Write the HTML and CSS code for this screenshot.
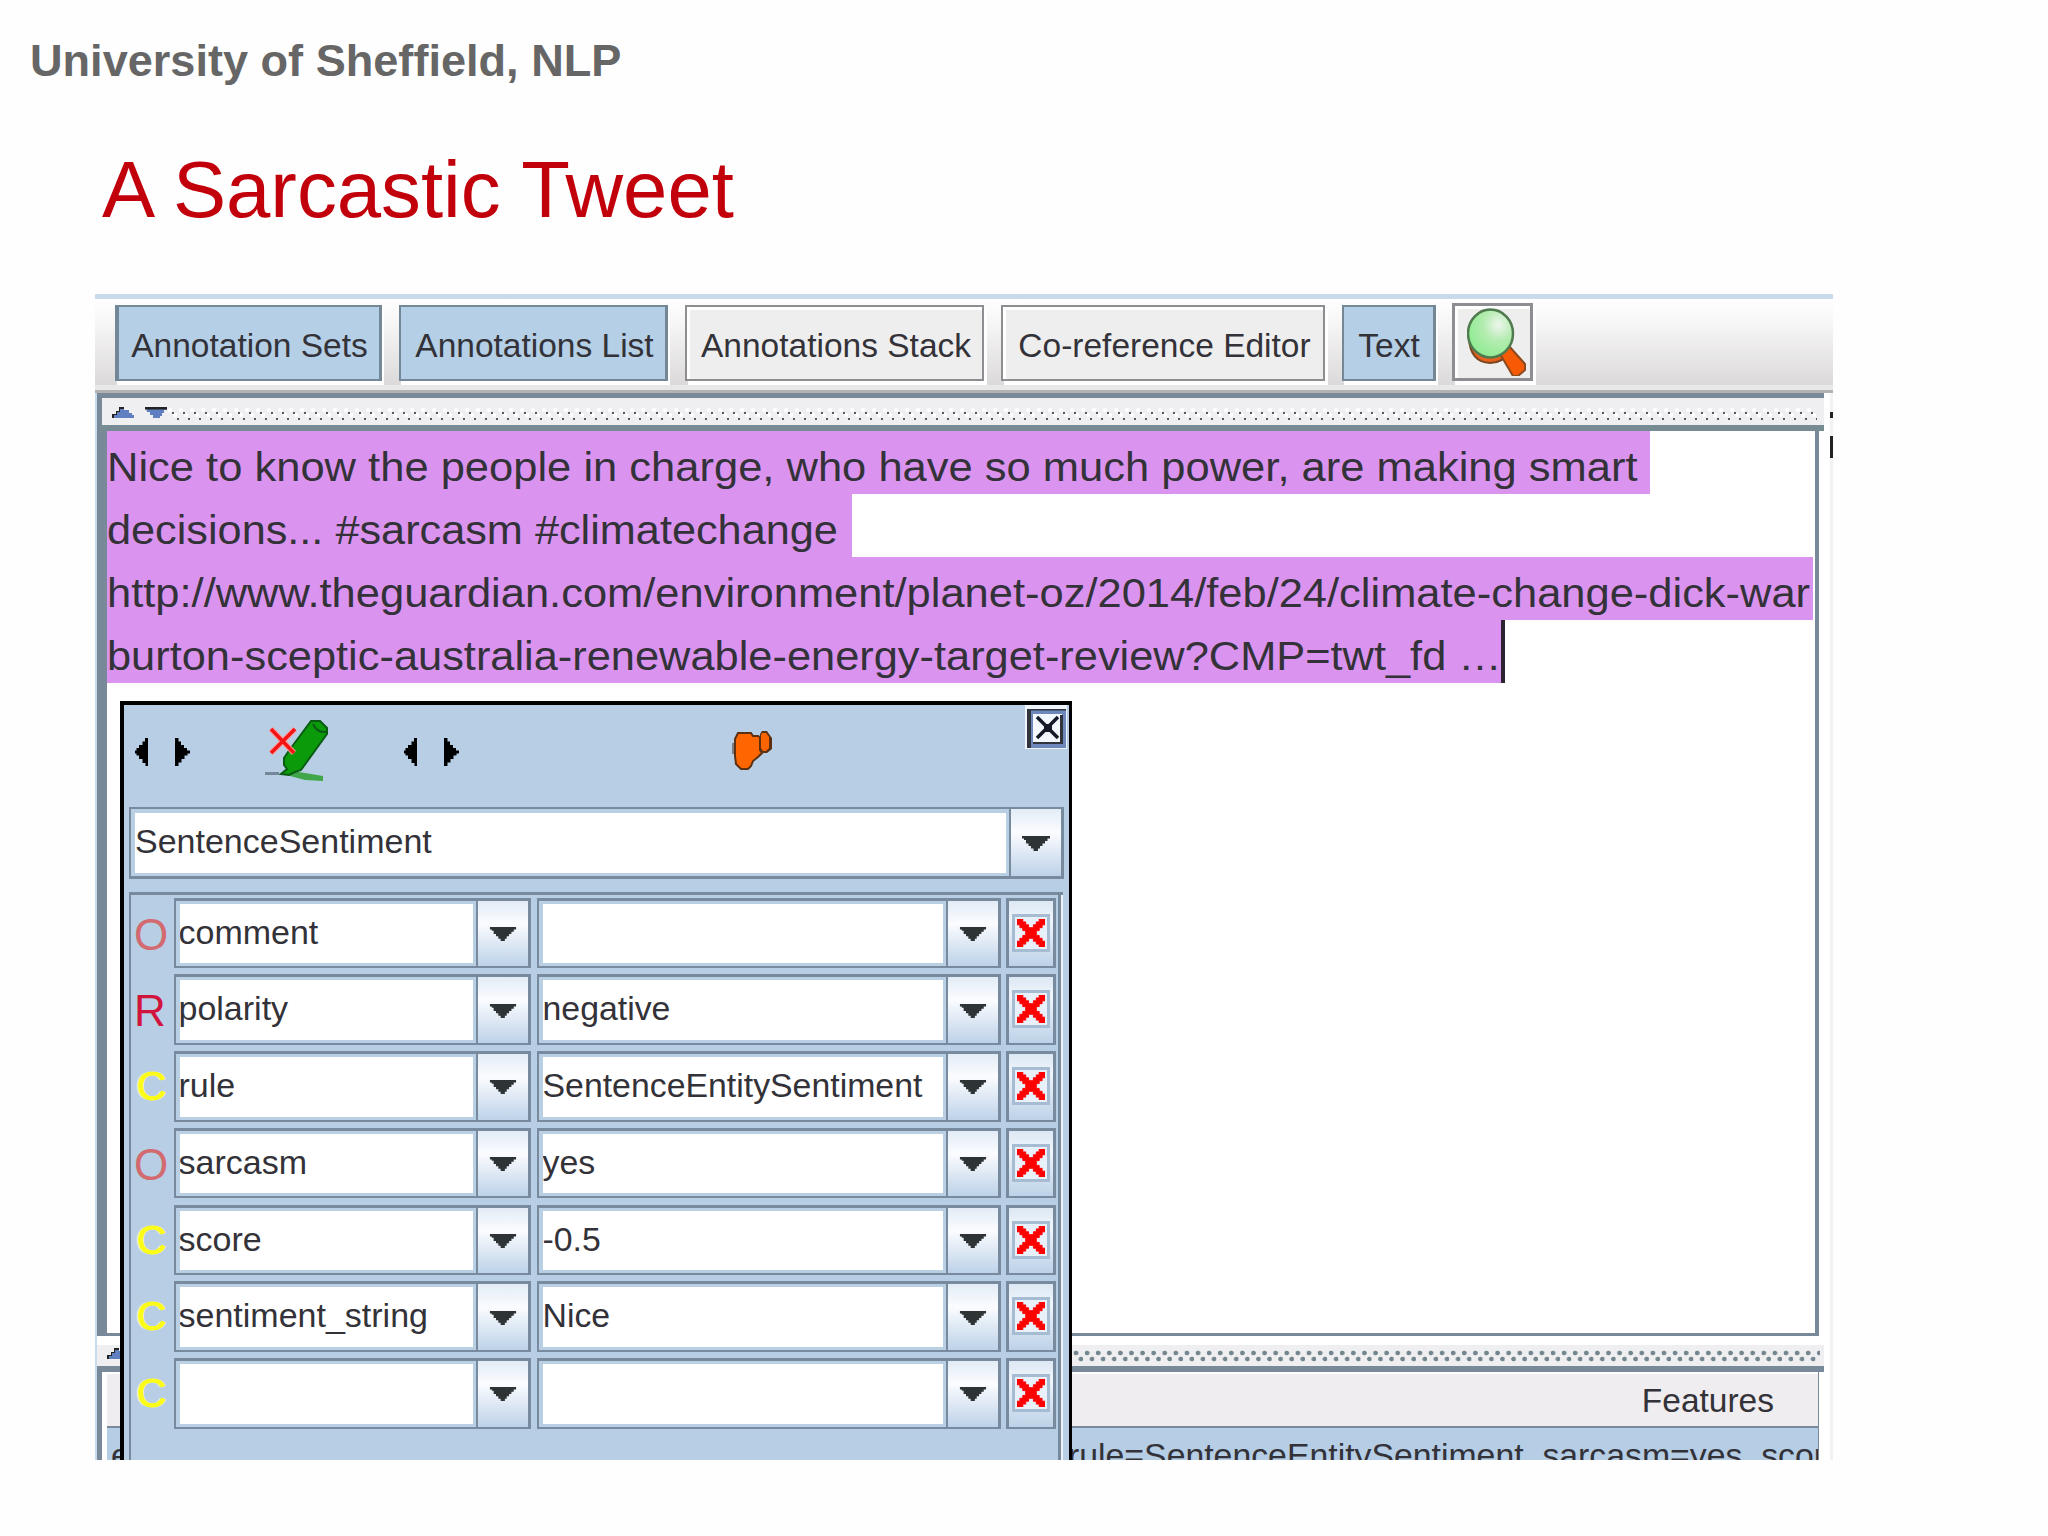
FILE: index.html
```html
<!DOCTYPE html>
<html lang="en">
<head>
<meta charset="utf-8">
<title>A Sarcastic Tweet</title>
<link rel="stylesheet" href="styles.css">
</head>
<body>
<svg class="defs" aria-hidden="true">
  <symbol id="down" viewBox="0 0 28 15"><path d="M0 0H28V2.6H25.5V5H23V7.500H20.500V10H18V12.500H16V15H11.500V12.500H9V10H6.500V7.500H4V4H2V2.600H0Z" fill="#2e3436"/></symbol>
  <symbol id="cross" viewBox="0 0 29 29"><path d="M0 0H6V3H9V6H12V9H17V6H20V3H23V0H29V6H26V9H23V12H20V17H23V20H26V23H29V29H23V26H20V23H17V20H12V23H9V26H6V29H0V23H3V20H6V17H9V12H6V9H3V6H0Z" fill="#f00" stroke="#f00"/></symbol>
  <symbol id="prev" viewBox="0 0 13 28"><path d="M13 0V28H10.500V25H7.500V21H4V17.500H1.500V15.500H0V12.500H1.500V10H4V7H7.500V3.500H10V0Z"/></symbol>
  <symbol id="next" viewBox="0 0 15 28"><path d="M0 0H3.500V3.500H6V7H9V10H12V12.500H15V15.500H12.500V17.500H9.500V21H6.500V24.500H3.500V28H0Z"/></symbol>
</svg>
<p class="org">University of Sheffield, NLP</p>
<h1 class="title">A Sarcastic Tweet</h1>

<main class="app">
  <div class="toolbar">
    <div class="tool on w1">Annotation Sets</div>
    <div class="tool on w2">Annotations List</div>
    <div class="tool w3">Annotations Stack</div>
    <div class="tool w4">Co-reference Editor</div>
    <div class="tool on w5">Text</div>
    <div class="tool find">
      <svg width="62" height="68" viewBox="0 0 62 68">
        <defs><radialGradient id="lens" cx=".68" cy=".32" r=".75"><stop offset="0" stop-color="#eef6ee"/><stop offset=".45" stop-color="#b4ecb0"/><stop offset="1" stop-color="#8cec90"/></radialGradient></defs>
        <path d="M2 30Q3 54 23 55Q36 55 42 44L40 34 4 28Z" fill="#e8601c" stroke="#7a4420" stroke-width="2"/>
        <path d="M33 46 42 38 58 56 58 62 51 68 46 68Z" fill="#f75a05" stroke="#8c4a20" stroke-width="2"/>
        <ellipse cx="23.500" cy="25.500" rx="22.500" ry="24" fill="url(#lens)" stroke="#4e7a4e" stroke-width="2.500"/>
      </svg>
    </div>
  </div>

  <div class="body">
    <div class="main">
      <div class="split top">
        <svg class="tri" width="56" height="14" viewBox="0 0 56 14"><path d="M0 11V7H4V4H7V0H12V3H17V6H20V8H22V11Z" fill="#5f7fc0"/><path d="M0 11V7H4V4H7V0H12V2H8V5H5V8H2V11Z" fill="#222"/><path d="M34 1H55V3H52V6H50V9H48V11H41V8H38V5H35Z" fill="#5f7fc0"/><path d="M33 0H55V2.500H33Z" fill="#222"/></svg>
        <div class="dots"></div>
      </div>
      <div class="pane">
        <div class="line l1"><span>Nice to know the people in charge, who have so much power, are making smart</span></div>
        <div class="line l2"><span>decisions... #sarcasm #climatechange</span></div>
        <div class="line l3"><span>http://www.theguardian.com/environment/planet-oz/2014/feb/24/climate-change-dick-war</span></div>
        <div class="line l4"><span>burton-sceptic-australia-renewable-energy-target-review?CMP=twt_fd …</span></div>
      </div>
      <div class="split low">
        <svg class="tri" width="22" height="11" viewBox="0 0 22 11"><path d="M0 11V7H4V4H7V0H12V3H17V6H20V8H22V11Z" fill="#5f7fc0"/><path d="M0 11V7H4V4H7V0H12V2H8V5H5V8H2V11Z" fill="#222"/></svg>
        <div class="dots"></div>
      </div>
      <div class="table">
        <div class="thead">Features</div>
        <div class="trow"><span class="cut">e</span><span class="feat">rule=SentenceEntitySentiment, sarcasm=yes, score</span></div>
      </div>
    </div>
    <div class="edge"></div>
  </div>

  <section class="popup">
    <svg class="close" width="42" height="44" viewBox="0 0 42 44"><path d="M0 0H42V44H0Z" fill="#eef3fb"/><path d="M2 4H41V43H2Z" fill="#6e88bd"/><path d="M2 4H6V43H2ZM2 4H41V5.500H2Z" fill="#30343c"/><path d="M8 9H37V37H8Z" fill="#f4f8ff"/><path d="M35 10H38V39H8V37H35Z" fill="#30343c"/><path d="M12 12 33 33M33 12 12 33" stroke="#141a28" stroke-width="3.500"/><path d="M19 19H27V27H19Z" fill="#141a28"/></svg>
    <div class="nav">
      <svg class="a1" width="13" height="28"><use href="#prev"/></svg>
      <svg class="a2" width="15" height="28"><use href="#next"/></svg>
      <svg class="pen" width="64" height="62" viewBox="0 0 64 62">
        <path d="M0 52H14V55H0Z" fill="#75889a"/><path d="M14 53 34 52 58 56V61L40 60Z" fill="#3fa64a"/>
        <path d="M46 1H55L62 8V14L36 50 30 52 24 55 16 54 22 49 19 45V38L23 32Z" fill="#0a9a0a" stroke="#0a5c14" stroke-width="2"/>
        <path d="M48 4Q52 13 61 12" fill="none" stroke="#0a5c14" stroke-width="2"/>
        <path d="M6 9 29 33M30 9 6 33" stroke="#ff9a9a" stroke-width="5.500"/><path d="M6 9 29 33M30 9 6 33" stroke="#f51414" stroke-width="3.500"/>
      </svg>
      <svg class="a3" width="13" height="28"><use href="#prev"/></svg>
      <svg class="a4" width="15" height="28"><use href="#next"/></svg>
      <svg class="pin" width="44" height="42" viewBox="0 0 44 42"><path d="M1 13H4V24H1Z" fill="#7c7c80"/><path d="M7 3H20L22 6H27L29 7V20L31 23 27 27 22 31 20 36 17 39H10L5 34 4 26V9Z" fill="#ff6600" stroke="#5c3010" stroke-width="2"/><path d="M31 1H36L38 4 41 8V19L36 23H32L29 19V4Z" fill="#5c3010"/><path d="M31 3H35L38 7V18L35 21H32L30 18V5Z" fill="#fa6400"/></svg>
    </div>
    <div class="combo type"><div class="field">SentenceSentiment</div><div class="drop"><svg width="28" height="15"><use href="#down"/></svg></div></div>
    <div class="features">
      <div class="row"><b class="o">O</b><div class="combo key"><div class="field">comment</div><div class="drop"><svg width="28" height="14"><use href="#down"/></svg></div></div><div class="combo val"><div class="field"></div><div class="drop"><svg width="28" height="14"><use href="#down"/></svg></div></div><div class="del"><i><svg width="28" height="28"><use href="#cross"/></svg></i></div></div>
      <div class="row"><b class="r">R</b><div class="combo key"><div class="field">polarity</div><div class="drop"><svg width="28" height="14"><use href="#down"/></svg></div></div><div class="combo val"><div class="field">negative</div><div class="drop"><svg width="28" height="14"><use href="#down"/></svg></div></div><div class="del"><i><svg width="28" height="28"><use href="#cross"/></svg></i></div></div>
      <div class="row"><b class="c">C</b><div class="combo key"><div class="field">rule</div><div class="drop"><svg width="28" height="14"><use href="#down"/></svg></div></div><div class="combo val"><div class="field">SentenceEntitySentiment</div><div class="drop"><svg width="28" height="14"><use href="#down"/></svg></div></div><div class="del"><i><svg width="28" height="28"><use href="#cross"/></svg></i></div></div>
      <div class="row"><b class="o">O</b><div class="combo key"><div class="field">sarcasm</div><div class="drop"><svg width="28" height="14"><use href="#down"/></svg></div></div><div class="combo val"><div class="field">yes</div><div class="drop"><svg width="28" height="14"><use href="#down"/></svg></div></div><div class="del"><i><svg width="28" height="28"><use href="#cross"/></svg></i></div></div>
      <div class="row"><b class="c">C</b><div class="combo key"><div class="field">score</div><div class="drop"><svg width="28" height="14"><use href="#down"/></svg></div></div><div class="combo val"><div class="field">-0.5</div><div class="drop"><svg width="28" height="14"><use href="#down"/></svg></div></div><div class="del"><i><svg width="28" height="28"><use href="#cross"/></svg></i></div></div>
      <div class="row"><b class="c">C</b><div class="combo key"><div class="field">sentiment_string</div><div class="drop"><svg width="28" height="14"><use href="#down"/></svg></div></div><div class="combo val"><div class="field">Nice</div><div class="drop"><svg width="28" height="14"><use href="#down"/></svg></div></div><div class="del"><i><svg width="28" height="28"><use href="#cross"/></svg></i></div></div>
      <div class="row"><b class="c">C</b><div class="combo key"><div class="field"></div><div class="drop"><svg width="28" height="14"><use href="#down"/></svg></div></div><div class="combo val"><div class="field"></div><div class="drop"><svg width="28" height="14"><use href="#down"/></svg></div></div><div class="del"><i><svg width="28" height="28"><use href="#cross"/></svg></i></div></div>
    </div>
  </section>
</main>
</body>
</html>
```
FILE: styles.css
```css
* { box-sizing: border-box; }
body {
  margin: 0;
  padding-top: 30.500px;
  height: 1536px;
  overflow: hidden;
  background: #fefefe;
  font-family: "Liberation Sans", Arial, sans-serif;
  color: #333238;
}
svg { display: block; flex: none; }
.defs { display: none; }
.org { margin: 0 0 0 30px; font-size: 45.100px; line-height: 60px; font-weight: bold; color: #666; }
.title { margin: 49.500px 0 54px 102px; font-size: 79.700px; line-height: 100px; font-weight: normal; color: #c2000b; }

.app {
  position: relative;
  display: flex;
  flex-direction: column;
  width: 1738px;
  height: 1166px;
  margin-left: 95px;
  overflow: hidden;
  background: #fff;
  font-size: 34px;
  white-space: nowrap;
}

/* toolbar */
.toolbar {
  display: flex;
  flex: none;
  gap: 17px;
  align-items: flex-start;
  height: 99px;
  padding: 6px 0 0 20px;
  border-top: 5px solid #c8daec;
  font-size: 33.500px;
  background:
    linear-gradient(#b4b2b2, #b4b2b2) 0 91px / 100% 3px no-repeat,
    linear-gradient(#e9e8e9, #e9e8e9) 0 86px / 100% 5px no-repeat,
    linear-gradient(#fff, #f8f7f8 25%, #dbd9da) 0 0 / 100% 86px no-repeat;
}
.tool {
  display: flex;
  align-items: center;
  justify-content: center;
  height: 76px;
  padding: 5px 0 0 3px;
  border: 2px solid #8e8e92;
  background: #efeeef;
  box-shadow: inset 3px 3px 0 #fff, 3px 4px 0 #fff;
}
.tool.on { background: #b5cfe6; border: 2px solid #748796; border-right-width: 3px; box-shadow: 2px 4px 0 #fff; }
.tool.w1 { width: 267px; border-left-width: 4px; padding-left: 1px; }
.w2 { width: 269px; }
.w3 { width: 299px; }
.w4 { width: 324px; }
.tool.w5 { width: 94px; padding-left: 1px; }
.find { width: 81px; height: 78px; margin-top: -2px; margin-left: -1px; border-width: 3px; justify-content: flex-start; padding: 0 0 0 12px; }

/* split panes */
.body { display: flex; flex: 1; min-height: 0; border-left: 2px solid #c8dcf0; }
.main { flex: none; width: 1727px; display: flex; flex-direction: column; }
.edge {
  margin-left: auto;
  width: 3px;
  background:
    linear-gradient(#222, #222) 0 19px / 100% 6px no-repeat,
    linear-gradient(#222, #222) 0 43px / 100% 22px no-repeat,
    #f3f1f2;
}
.split { display: flex; flex: none; background-color: #efeff1; }
.split.top { height: 38px; padding: 9px 7px 0 10px; border: solid #78899a; border-width: 5px 0 6px 5px; border-bottom-color: #778c92; }
.split .dots { flex: 1; }
.top .dots {
  height: 16px;
  background:
    radial-gradient(circle at 5px 6px, #555a60 1px, transparent 1.400px) 0 0 / 11px 16px,
    radial-gradient(circle at 10px 12px, #555a60 1px, transparent 1.400px) 0 0 / 11px 16px,
    radial-gradient(circle at 2px 3px, #fff 1.500px, transparent 2.500px) 0 0 / 11px 16px,
    radial-gradient(circle at 7px 8px, #fff 1.500px, transparent 2.500px) 0 0 / 11px 16px;
}
.pane { flex: none; height: 905px; border: solid #78899a; border-width: 0 4px 3px 10px; margin-right: 5px; background: #fff; }
.line { height: 63px; padding-top: 8px; line-height: 57px; font-size: 41px; background: #da94ef; }
.line span { display: inline-block; transform: scaleX(1.061); transform-origin: 0 0; }
.l1 { width: 1543px; }
.l2 { width: 745px; }
.l2 span { transform: scaleX(1.055); }
.l3 { width: 1706px; }
.l3 span { transform: scaleX(1.06); }
.l4 { width: 1398px; border-right: 4px solid #2c2430; }
.l4 span { transform: scaleX(1.058); }
.split.low { height: 27px; margin-top: 9px; padding: 3px 4px 0 10px; border-bottom: 6px solid #78899a; }
.low .dots {
  height: 16px;
  background:
    radial-gradient(circle at 4px 5px, #73868e 2px, transparent 2.700px) 0 0 / 11.100px 16px,
    radial-gradient(circle at 9px 11px, #73868e 2px, transparent 2.700px) 0 0 / 11.100px 16px;
}
.table { flex: none; height: 88px; margin-right: 5px; border-left: 5px solid #78899a; border-right: 1px solid #78899a; padding: 2px 0 0 5px; background: #fff; overflow: hidden; }
.thead { height: 54px; padding: 0 44px 0 0; text-align: right; line-height: 54px; font-size: 33.500px; background: #efedef; border-bottom: 2px solid #78899a; }
.trow { display: flex; height: 40px; padding: 8px 0 0 4px; line-height: 38px; font-size: 33.800px; background: #b5cde5; }
.cut { flex: none; width: 957px; }

/* annotation editor */
.popup {
  position: absolute;
  left: 25px;
  top: 407px;
  width: 952px;
  height: 765px;
  padding: 102px 0 0 5px;
  border: solid #000;
  border-width: 4px 3px 4px 4px;
  background: #b7cee5;
}
.close { position: absolute; right: 2px; top: 0; }
.nav { position: absolute; left: 11px; top: 15px; display: flex; align-items: flex-start; height: 62px; }
.nav svg { margin-top: 18px; }
.nav .a2 { margin-left: 27px; }
.nav .pen { margin: 0 0 0 75px; }
.nav .a3 { margin-left: 75px; }
.nav .a4 { margin-left: 27px; }
.nav .pin { margin: 10px 0 0 272px; }
.combo { display: flex; border: solid #778a9e; }
.field { flex: 1; border: solid #b9cfe4; background: #fff; line-height: 57px; overflow: hidden; }
.drop { display: flex; align-items: center; justify-content: center; border-left: 2px solid #778a9e; background: linear-gradient(#e2ecf6, #fbfcff 35%, #bdd2e8); padding-top: 1px; }
.type { width: 935px; height: 72px; border-width: 2px 3px 3px 2px; }
.type .field { border-width: 4px 3px 3px 4px; line-height: 57px; }
.type .drop { width: 52px; }
.features {
  display: flex;
  flex-direction: column;
  gap: 6.250px;
  width: 934px;
  height: 600px;
  margin-top: 13px;
  padding: 2.500px 0 0 3px;
  border: solid #778a9e;
  border-width: 3px 0 0 2px;
  background: linear-gradient(#eef3fa, #eef3fa) 930px 0 / 2px 100% no-repeat, linear-gradient(#778a9e, #778a9e) 927px 0 / 3px 100% no-repeat;
}
.row { display: flex; height: 70.500px; flex: none; }
.row b { width: 39.500px; text-align: left; font-size: 45px; line-height: 73px; font-weight: normal; }
.row .o { color: #d26a70; }
.row .o, .row .r { font-size: 44px; }
.row .r { color: #d2143c; }
.row .c { color: #fbfb18; font-size: 41px; line-height: 70px; padding-left: 3px; -webkit-text-stroke: 1px #fbfb18; text-shadow: -2px 0 1px #fbfbd0; }
.row .combo { border-width: 3px 3px 2px 2px; }
.row .field { border-width: 3px 3px 3px 4px; }
.row .drop { width: 52px; }
.key { width: 357.500px; margin-right: 5.500px; }
.val { width: 464px; margin-right: 5.500px; }
.val .field { font-size: 33.850px; }
.key .field { text-indent: -1px; }
.del { display: flex; justify-content: center; width: 50px; padding: 13px 1px 0 0; border: solid #778a9e; border-width: 3px 3px 2px 3px; background: linear-gradient(#dce8f4, #f0f5fb 30%, #bdd2e8); }
.del i { display: flex; align-items: center; justify-content: center; width: 38px; height: 38px; border: 3px solid #a5bcd2; background: #e8f0fa; }
```
